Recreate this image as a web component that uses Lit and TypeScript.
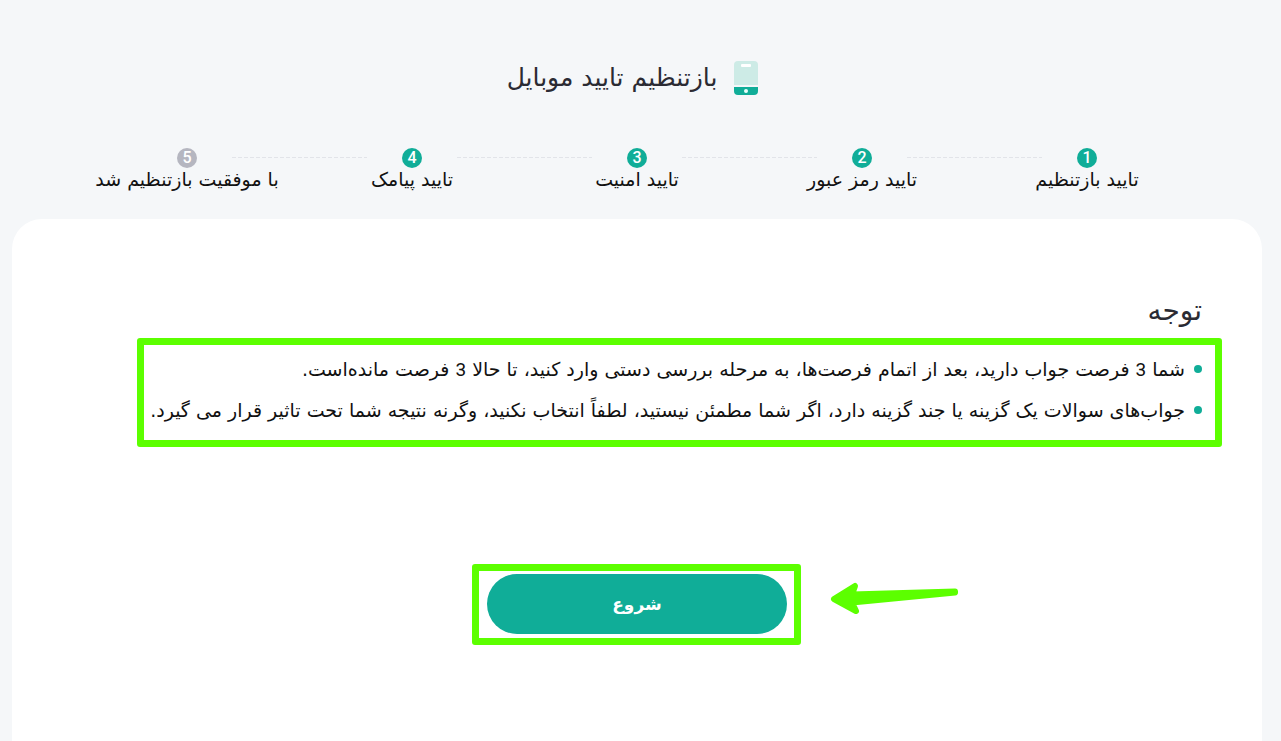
import { LitElement, html, css } from "lit";
import { customElement, property } from "lit/decorators.js";
import { classMap } from "lit/directives/class-map.js";

const STEPS = [
  "تایید بازتنظیم",
  "تایید رمز عبور",
  "تایید امنیت",
  "تایید پیامک",
  "با موفقیت بازتنظیم شد",
];

const NOTES = [
  "شما 3 فرصت جواب دارید، بعد از اتمام فرصت‌ها، به مرحله بررسی دستی وارد کنید، تا حالا 3 فرصت مانده‌است.",
  "جواب‌های سوالات یک گزینه یا جند گزینه دارد، اگر شما مطمئن نیستید، لطفاً انتخاب نکنید، وگرنه نتیجه شما تحت تاثیر قرار می گیرد.",
];

@customElement("step-list")
export class StepList extends LitElement {
  @property({ attribute: false }) steps: string[] = [];
  @property({ type: Number }) reached = 1;

  static styles = css`
    :host {
      display: block;
    }
    .steps {
      display: grid;
      grid-template-columns: repeat(5, 1fr);
      width: 90%;
      margin: 0 auto;
      padding: 0;
      list-style: none;
    }
    .step {
      position: relative;
      display: flex;
      flex-direction: column;
      align-items: center;
      white-space: nowrap;
    }
    .step:not(:last-child)::after {
      content: "";
      position: absolute;
      top: 9px;
      left: -30%;
      width: 60%;
      height: 1px;
      background: repeating-linear-gradient(to right, #e2e4e9 0 4px, transparent 4px 6px);
    }
    .number {
      width: 20px;
      height: 20px;
      border-radius: 50%;
      background: #b5b6c0;
      color: #fff;
      font: 500 16px/19px Roboto, sans-serif;
      text-align: center;
    }
    .done {
      background: #10ad98;
    }
    .label {
      font-size: 19px;
      line-height: 22px;
    }
  `;

  render() {
    return html`<ol class="steps">
      ${this.steps.map(
        (label, i) => html`<li class="step">
          <span class=${classMap({ number: true, done: i < this.reached })}>${i + 1}</span>
          <span class="label">${label}</span>
        </li>`,
      )}
    </ol>`;
  }
}

@customElement("app-root")
export class AppRoot extends LitElement {
  static styles = css`
    :host {
      display: flex;
      flex-direction: column;
      box-sizing: border-box;
      min-height: 100vh;
      padding: 56px 19px 0 12px;
      background: #f5f7f9;
      color: #111;
      font-family: "DejaVu Sans", sans-serif;
    }
    .title {
      display: flex;
      justify-content: center;
      align-items: center;
      gap: 17px;
      margin: 0 0 48px;
      padding-right: 9px;
      font-size: 25px;
      font-weight: 400;
      line-height: 44px;
      color: #2b2b33;
    }
    .phone {
      display: block;
      width: 24px;
      height: 34px;
    }
    .panel {
      flex: 1;
      box-sizing: border-box;
      margin-top: 29px;
      padding: 72px 60px 100px;
      border-radius: 30px 30px 0 0;
      background: #fff;
    }
    .heading {
      margin: 0;
      font-size: 28px;
      font-weight: 400;
      line-height: 40px;
      color: #2b2b33;
    }
    .notes {
      position: relative;
      display: flex;
      flex-direction: column;
      gap: 9px;
      width: fit-content;
      margin: 22px 0 0;
      padding: 0;
      list-style: none;
      font-size: 19px;
      line-height: 32px;
    }
    .notes::after {
      content: "";
      position: absolute;
      inset: -15px -20px -21px -13px;
      border: 7px solid #5cff00;
      border-radius: 3px;
    }
    .note {
      display: flex;
      align-items: center;
      gap: 9px;
    }
    .note::before {
      content: "";
      flex: none;
      width: 8px;
      height: 8px;
      border-radius: 50%;
      background: #10ad98;
    }
    .digit {
      font-family: Roboto, sans-serif;
      line-height: 1;
    }
    .actions {
      display: flex;
      justify-content: center;
      margin-top: 148px;
    }
    .spot {
      position: relative;
    }
    .spot::after {
      content: "";
      position: absolute;
      inset: -10px -14px -11px -15px;
      border: 7px solid #5cff00;
      border-radius: 3px;
      pointer-events: none;
    }
    .start {
      display: block;
      width: 300px;
      height: 60px;
      border: 0;
      border-radius: 30px;
      background: #10ad98;
      color: #fff;
      font: 700 17px "DejaVu Sans", sans-serif;
      cursor: pointer;
    }
    .arrow {
      position: absolute;
      top: 6px;
      left: 342px;
      width: 132px;
      height: 36px;
    }
  `;

  render() {
    return html`
      <h1 class="title" dir="rtl">
        <svg class="phone" viewBox="0 0 24 34" aria-hidden="true">
          <path fill="#cdebe6" d="M4 0h16a4 4 0 0 1 4 4v20H0V4a4 4 0 0 1 4-4z" />
          <rect x="7" y="3" width="10" height="3" rx="1" fill="#fff" />
          <path fill="#10ad98" d="M0 26h24v4a4 4 0 0 1-4 4H4a4 4 0 0 1-4-4z" />
          <circle cx="12" cy="30" r="2" fill="#e9fffb" />
        </svg>
        <span>بازتنظیم تایید موبایل</span>
      </h1>
      <step-list dir="rtl" .steps=${STEPS} .reached=${4}></step-list>
      <main class="panel" dir="rtl">
        <h2 class="heading">توجه</h2>
        <ul class="notes">
          ${NOTES.map(
            (note) => html`<li class="note">
              <span
                >${note
                  .split(/(\d+)/)
                  .map((part) => (/^\d+$/.test(part) ? html`<span class="digit">${part}</span>` : part))}</span
              >
            </li>`,
          )}
        </ul>
        <div class="actions">
          <div class="spot">
            <button class="start" type="button">شروع</button>
            <svg class="arrow" viewBox="0 0 132 36" aria-hidden="true">
              <path
                fill="#5cff00"
                stroke="#5cff00"
                stroke-width="6"
                stroke-linejoin="round"
                d="M5 19L26 6L23 14.500L126 11.500V12.500L23 22.500L27 31z"
              />
            </svg>
          </div>
        </div>
      </main>
    `;
  }
}
